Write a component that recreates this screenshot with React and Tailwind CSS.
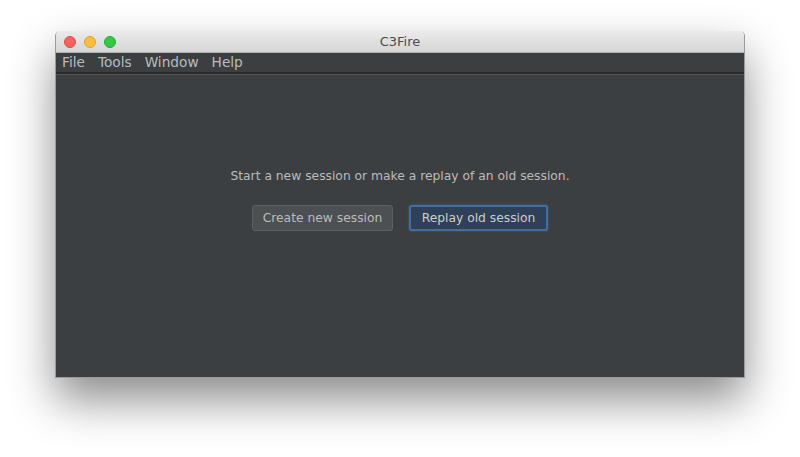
export default function App() {
	return (
		<div className="w-[800px] h-[457px] bg-white pt-[31px] pl-[55px]" style={{ fontFamily: "'Lucida Grande', 'DejaVu Sans', sans-serif" }}>
			<div className="w-[690px] h-[347px] flex flex-col rounded-t-[5px] overflow-hidden shadow-[0_22px_45px_rgba(0,0,0,0.45)] border border-[#9a9a9a] border-t-0">
				<div className="relative h-[22px] flex items-center bg-gradient-to-b from-[#ebebeb] to-[#d5d5d5] border-b border-[#b1b1b1]">
					<div className="flex gap-[8px] pl-[8px]">
						<span className="w-[12px] h-[12px] rounded-full bg-[#fc605c] border border-[#de4a45]"></span>
						<span className="w-[12px] h-[12px] rounded-full bg-[#fdbc40] border border-[#dea236]"></span>
						<span className="w-[12px] h-[12px] rounded-full bg-[#34c84a] border border-[#27aa35]"></span>
					</div>
					<div className="absolute inset-0 flex items-center justify-center text-[13px] text-[#4d4d4d]">C3Fire</div>
				</div>
				<div className="h-[21px] flex items-center gap-[13px] px-[6px] bg-[#3c3f41] text-[13.7px] text-[#bbbbbb] border-b-2 border-[#2b2b2b]">
					<span>File</span>
					<span>Tools</span>
					<span>Window</span>
					<span>Help</span>
				</div>
				<div className="flex-1 bg-[#3c3f41] border-t border-[#555555] flex flex-col items-center pt-[92px]">
					<p className="text-[12.3px] text-[#bbbbbb]">Start a new session or make a replay of an old session.</p>
					<div className="flex gap-[16px] mt-[20px]">
						<button className="h-[26px] w-[141px] rounded-[3px] border border-[#5e6060] bg-[#4c5052] text-[12.3px] text-[#bbbbbb]">Create new session</button>
						<button className="h-[26px] w-[139px] rounded-[3px] border-2 border-[#426e9e] bg-[#2e4159] text-[12.3px] text-[#cccccc] shadow-[0_0_2px_rgba(80,140,210,0.6)]">Replay old session</button>
					</div>
				</div>
			</div>
		</div>
	);
}
